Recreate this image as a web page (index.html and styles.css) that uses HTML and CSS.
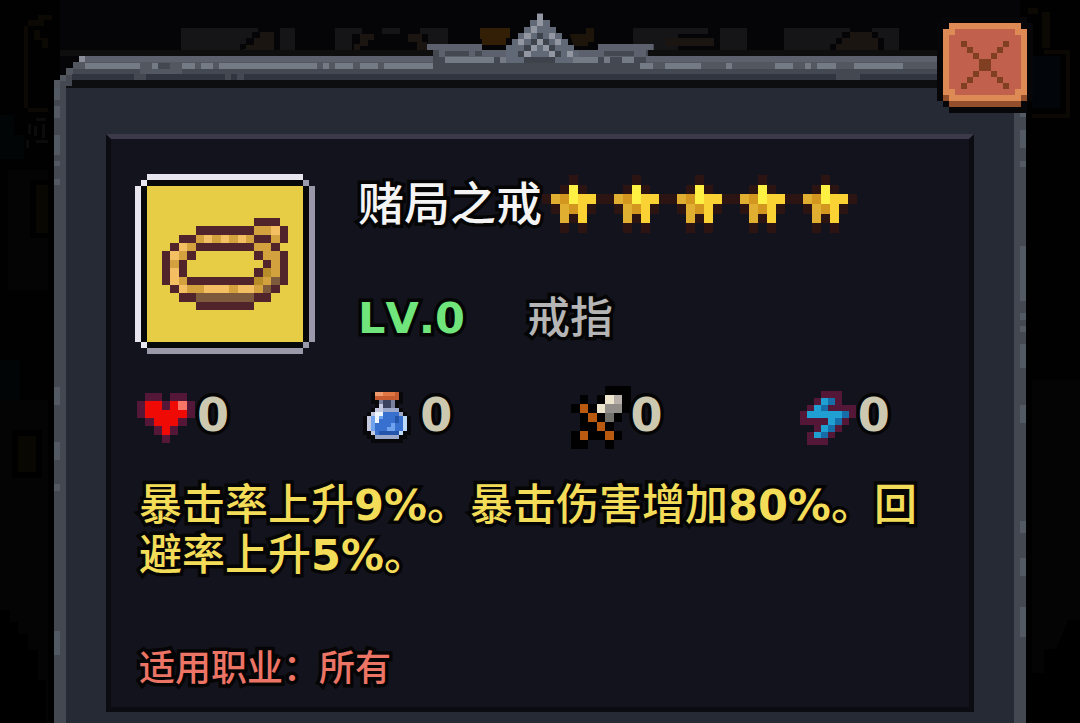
FILE: index.html
```html
<!DOCTYPE html>
<html lang="zh-CN">
<head>
<meta charset="utf-8">
<meta name="viewport" content="width=device-width, initial-scale=1">
<title>赌局之戒</title>
<link rel="stylesheet" href="styles.css">
</head>
<body>
<svg class="backdrop" viewBox="0 0 1080 723" preserveAspectRatio="none" aria-hidden="true">
  <path fill="#050507" d="M60 0H1020V90H60z"/>
  <path fill="#040404" d="M8 170H48V290H8zM0 400H48V723H0zM1032 380H1080V723H1032z"/>
  <path fill="#000" d="M0 610h10v12h8v12h10v16h10v30h8v43H0zM1068 620h12v103h-48v-50h12v-24h12z"/>
  <path fill="#020506" d="M0 115h14v20h10v24H0zM0 360h20v40H0z"/>
  <path fill="#000" d="M30 180h18v58H30zM12 430h30v48H12z"/>
  <path fill="#080701" d="M36 185h12v48H36zM18 436h18v36H18z"/>
  <path fill="#0c0803" d="M24 26h4v82h-4zM28 20h10v-5h14v5h-8v6H28zM34 30h6v8h8v10h-6v-8h-8zM28 108h20v4H28z"/>
  <path fill="#0b0b0b" d="M28 124h3v10h-3zM26 140h3v8h-3zM36 118h10v3H36zM34 126h3v10h-3zM42 124h3v14h-3zM36 140h12v3H36z"/>
  <path fill="#0c0803" d="M1028 8h10v6h-10zM1042 12h8v36h-8zM1044 50h26v68h-38v-4h34V54h-22z"/>
  <path fill="#02060a" d="M1032 56h28v52h-28z"/>
  <path fill="#0e0e0f" d="M60 50H1020V56H60z"/>
  <path fill="#151517" d="M181 28h114v22H181zM335 28h113v22H335zM633 28h114v22H633zM784 28h115v22H784z"/>
  <path fill="#050507" d="M274 28h6v22h-6zM240 50v-6h6v-6h6v-6h6v-6h22v18zM352 50V34h10v-6h20v6h18v-6h20v6h8v16zM678 34h30v-6h12v22h-42zM830 50v-6h6v-6h6v-6h8v-4h22v4h6v6h6v12z"/>
  <path fill="#1a1510" d="M246 50v-5h8v-7h6v-6h14v18zM354 44h6V34h14v6h-6v6h-8v4h-6zM408 34h14v8h5v8h-10v-8h-9zM666 38h48v8h-48zM836 50v-6h6v-6h8v-6h22v6h6v12z"/>
  <path fill="#331e06" d="M480 28h30v10h-4v7h-24v-6h-2z"/>
  <path fill="#1d1509" d="M570 34h18v12h-14zM586 28h8v14h-6v-8h-2z"/>
</svg>
<main class="dialog" aria-labelledby="item-name">
  <svg class="trim" viewBox="54 8 972 80" preserveAspectRatio="none" aria-hidden="true">
    <path fill="#444850" d="M54 88V80h6v-5h6v-6h7v-7h6v-6H433v-6h-6v-6h55v6h24v-5h6v-6h6v-6h6v-6h6v-7h7v-7h6v7h7v7h6v6h6v6h6v6h6v5h25v-6h55v6h-6v6H1026V88z"/>
    <path fill="#5c616d" d="M79 56H433v6H79zM427 44h55v6h-55zM439 50h67v7h-67zM573 50h73v7h-73zM598 44h55v6h-55zM646 56h380v6H646z"/>
    <path fill="#525760" d="M73 62H433v7H73zM646 62h380v7H646zM54 80h6v8h-6zM60 75h6v6h-6zM66 68h7v7h-7zM140 68h42v6h-42z"/>
    <path fill="#8b8e98" d="M79 56h6v6h-6z"/>
    <path fill="#444850" d="M158 63h12v6h-12zM445 51h24v5h-24zM475 51h7v5h-7zM604 51h30v5h-30z"/>
    <path fill="#757b84" d="M85 63h55v6H85zM152 63h6v6h-6zM182 63h13v6h-13zM201 63h12v6h-12zM219 63h98v6h-98zM323 63h6v6h-6zM335 63h18v6h-18zM360 63h18v6h-18zM384 63h49v6h-49zM445 57h49v6h-49zM500 57h6v6h-6zM573 57h25v6h-25zM604 57h6v6h-6zM622 57h12v6h-12zM640 63h13v6h-13zM665 63h36v6h-36zM726 63h6v6h-6zM775 63h18v6h-18zM805 63h6v6h-6zM817 63h19v6h-19zM854 63h49v6h-49z"/>
    <path fill="#31353f" d="M72 74h62v6H72zM146 74h79v6h-79zM231 74h6v6h-6zM244 74h592v6H244zM860 74h166v6H860z"/>
    <path fill="#0c0e10" d="M72 80h954v8H72zM66 86h7v2h-7z"/>
    <path fill="#626976" d="M537 14h6v6h7v7h6v6h6v6h6v6h6v6h5v6h-6v6H506V45h6v-6h6v-6h6v-6h6v-7h7z"/>
    <path fill="#9297a2" d="M537 14h6v12h-6zM531 26h6v7h-6zM524 33h7v6h-7zM518 39h6v6h-6zM549 33h6v6h-6zM555 39h6v6h-6zM537 39h6v6h-6zM531 45h6v6h-6zM543 45h6v6h-6zM524 51h7v6h-7zM549 51h6v6h-6zM567 51h6v6h-6z"/>
    <path fill="#3e424b" d="M537 33h6v6h-6zM531 39h6v6h-6zM543 39h6v6h-6zM524 45h7v6h-7zM549 45h6v6h-6zM518 51h6v6h-6zM555 51h6v6h-6zM524 57h31v6h-31z"/>
  </svg>
  <div class="body">
    <svg class="rail rail-left" viewBox="0 88 6 635" preserveAspectRatio="none" aria-hidden="true">
      <path fill="#535a64" d="M0 88h6v12H0zM0 106h6v12H0zM0 135h6v20H0zM0 161h6v5H0zM0 179h6v6H0zM0 387h6v18H0zM0 442h6v18H0zM0 484h6v7H0zM0 631h6v24H0z"/>
    </svg>
    <svg class="rail rail-right" viewBox="0 88 6 635" preserveAspectRatio="none" aria-hidden="true">
      <path fill="#535a64" d="M0 106h6v11H0zM0 130h6v18H0zM0 161h6v6H0zM0 246h6v55H0zM0 313h6v7H0zM0 326h6v6H0zM0 344h6v24H0zM0 405h6v18H0zM0 521h6v12H0zM0 558h6v18H0zM0 607h6v30H0z"/>
    </svg>
    <section class="card">
      <header class="item">
        <svg class="item-icon" viewBox="0 0 180 180" role="img" aria-label="戒指">
          <path fill="#07080a" d="M12 6h156v6h6v156h-6v6H12v-6H6V12h6z"/>
          <path fill="#e8e5ee" d="M12 0h156v6H12zM0 12h6v156H0zM6 6h6v6H6zM6 168h6v6H6z"/>
          <path fill="#9b98a9" d="M12 174h156v6H12zM174 12h6v156h-6zM168 6h6v6h-6zM168 168h6v6h-6z"/>
          <path fill="#e7cd46" d="M12 12h156v156H12z"/>
          <svg x="27" y="44" width="126" height="92" viewBox="0 0 15 11" preserveAspectRatio="none">
            <path fill="#51232b" d="M11 0h3v1h-3zM4 1h7v1H4zM14 1h1v2h-1zM2 2h2v1H2zM11 2h2v1h-2zM1 3h1v1H1zM4 3h7v1H4zM13 3h1v1h-1zM0 4h1v4H0zM3 4h1v1H3zM11 4h1v1h-1zM14 4h1v4h-1zM2 5h1v2H2zM12 5h1v1h-1zM11 6h1v1h-1zM3 7h8v1H3zM1 8h1v1H1zM13 8h1v1h-1zM2 9h2v1H2zM11 9h2v1h-2zM4 10h7v1H4z"/>
            <path fill="#d3a23f" d="M11 1h2v1h-2zM4 2h1v1H4zM6 2h1v1H6zM8 2h1v1H8zM10 2h1v1h-1zM13 2h1v1h-1zM3 3h1v1H3zM11 3h2v1h-2zM2 4h1v1H2zM12 4h2v1h-2zM1 5h1v1H1zM13 5h1v2h-1zM2 7h1v1H2zM12 7h1v1h-1zM3 8h2v1H3zM8 8h1v1H8zM11 8h1v1h-1z"/>
            <path fill="#f3bf62" d="M13 1h1v1h-1zM5 2h1v1H5zM7 2h1v1H7zM9 2h1v1H9zM2 3h1v1H2zM1 4h1v1H1zM1 6h1v2H1zM2 8h1v1H2zM5 8h3v1H5zM9 8h2v1H9z"/>
            <path fill="#b88c28" d="M12 6h1v1h-1zM11 7h1v1h-1z"/>
            <path fill="#7d5a3b" d="M13 7h1v1h-1zM12 8h1v1h-1zM4 9h7v1H4z"/>
          </svg>
        </svg>
        <div class="item-info">
          <div class="title-row">
            <h1 id="item-name" class="name">赌局之戒</h1>
            <svg class="stars" viewBox="0 0 35 6" preserveAspectRatio="none" role="img" aria-label="五星">
              <defs>
                <g id="star">
                  <path fill="#2b1411" d="M3 0h1v1H3zM2 1h1v1H2zM4 1h1v1H4zM0 2h1v1H0zM6 2h1v1H6zM1 3h1v1H1zM5 3h1v1H5zM3 4h1v1H3zM2 5h1v1H2zM4 5h1v1H4z"/>
                  <path fill="#e0ae30" d="M1 2h1v1H1zM2 3h1v2H2z"/>
                  <path fill="#d3961f" d="M2 2h1v1H2zM3 3h1v1H3z"/>
                  <path fill="#fff144" d="M3 1h1v2H3z"/>
                  <path fill="#fbd233" d="M4 2h2v1H4zM4 3h1v2H4z"/>
                </g>
              </defs>
              <use href="#star"/><use href="#star" x="7"/><use href="#star" x="14"/><use href="#star" x="21"/><use href="#star" x="28"/>
            </svg>
          </div>
          <div class="level-row">
            <span class="level">LV.0</span>
            <span class="kind">戒指</span>
          </div>
        </div>
      </header>
      <ul class="stats">
        <li class="stat">
          <svg class="heart" viewBox="0 0 7 6" preserveAspectRatio="none" role="img" aria-label="生命">
            <path fill="#541738" d="M1 0h2v1H1zM4 0h2v1H4zM0 1h1v2H0zM3 1h1v1H3zM6 1h1v2H6zM1 3h1v1H1zM5 3h1v1H5zM2 4h1v1H2zM4 4h1v1H4zM3 5h1v1H3z"/>
            <path fill="#f00a05" d="M1 1h2v1h1V1h2v2H5v1H4v1H3V4H2V3H1z"/>
            <path fill="#fb7566" d="M5 1h1v1H5z"/>
          </svg>
          <span class="value">0</span>
        </li>
        <li class="stat stat-potion">
          <svg class="potion" viewBox="0 0 12 13" preserveAspectRatio="none" role="img" aria-label="魔法">
            <path fill="#08080b" d="M2 0h8v3h-1v1h1v1h1v1h1v5h-1v1h-1v1H2v-1H1v-1H0V6h1V5h1V4h1V3H2z"/>
            <path fill="#c75c31" d="M3 0h6v2H3z"/><path fill="#ee9a6d" d="M3 0h2v1H3z"/><path fill="#e17743" d="M5 0h3v1H5z"/>
            <path fill="#3b4260" d="M5 2h2v2H5z"/><path fill="#79809d" d="M4 2h1v1H4zM7 2h1v2H7z"/>
            <path fill="#c4c9df" d="M4 3h1v1H4zM3 4h2v1H3zM2 5h1v1H2zM1 6h1v4H1zM2 10h1v1H2z"/>
            <path fill="#9da9ca" d="M5 4h4v1H5zM9 5h1v1H9zM3 11h6v1H3z"/>
            <path fill="#bcd9f5" d="M10 6h1v4h-1zM9 10h1v1H9z"/>
            <path fill="#3770ce" d="M3 5h6v1h1v4H9v1H3v-1H2V6h1z"/>
            <path fill="#6fa3ed" d="M2 6h3v1H4v1H3v2H2zM7 8h1v1H7zM6 9h2v1H6z"/>
            <path fill="#edf5ff" d="M3 5h2v1H4v2H3z"/>
            <path fill="#2455aa" d="M8 6h1v2H8zM4 10h5v1H4z"/>
          </svg>
          <span class="value">0</span>
        </li>
        <li class="stat stat-sword">
          <svg class="sword" viewBox="0 0 7 7" preserveAspectRatio="none" role="img" aria-label="攻击">
            <path fill="#010101" d="M4 0h3v3H6V1H4zM1 1h1v1H1zM3 1h1v1H3zM0 2h1v1H0zM2 2h1v1H2zM1 3h1v1H1zM3 3h1v1H3zM5 3h1v1H5zM1 4h2v1H1zM4 4h1v1H4zM0 5h1v1h1v1H0zM2 5h2v1H2zM5 5h1v1H5zM4 6h1v1H4z"/>
            <path fill="#b95a10" d="M1 2h1v1H1zM2 3h1v1H2zM3 4h1v1H3zM4 5h1v1H4zM1 5h1v1H1z"/>
            <path fill="#eee5cf" d="M4 1h1v1H4zM3 2h1v1H3z"/><path fill="#b7b0aa" d="M5 1h1v1H5z"/>
            <path fill="#918e89" d="M4 2h2v1H4z"/><path fill="#73716c" d="M4 3h1v1H4z"/>
          </svg>
          <span class="value">0</span>
        </li>
        <li class="stat">
          <svg class="bolt" viewBox="0 0 8 8" preserveAspectRatio="none" role="img" aria-label="速度">
            <path fill="#541738" d="M3 0h3v2h2v2H7v1H6v1H5v1H4v1H1V6h1V5H0V3h1V2h1V1h1z"/>
            <path fill="#209fd3" d="M3 1h1v1H3zM2 2h1v1H2zM1 3h5v1H1zM4 4h1v1H4zM3 5h1v1H3zM2 6h1v1H2z"/>
            <path fill="#176da8" d="M4 1h1v1H4zM3 2h1v1H3zM6 3h1v1H6zM5 4h1v1H5zM4 5h1v1H4zM3 6h1v1H3z"/>
          </svg>
          <span class="value">0</span>
        </li>
      </ul>
      <p class="effect">暴击率上升<b>9%</b>。暴击伤害增加<b>80%</b>。回避率上升<b>5%</b>。</p>
      <p class="classes">适用职业：所有</p>
    </section>
  </div>
  <button class="close" type="button" aria-label="关闭">
    <svg viewBox="-1 -1 16 16" aria-hidden="true">
      <path fill="#07070a" d="M0-1h14v1h1v13h-1v2H1v-1H0v-1h-1V0h1z"/>
      <path fill="#de8a55" d="M1 0h12v1h1v11h-1v1H1v-1H0V1h1z"/>
      <path fill="#934f2b" d="M0 12h1v1h12v-1h1v1h-1v1H1v-1H0z"/>
      <path fill="#c1604c" d="M2 1h10v1h1v9h-1v1H2v-1H1V2h1z"/>
      <path fill="#803f22" d="M3 3h1v1H3zM4 4h1v1H4zM5 5h1v1H5zM6 6h2v2H6zM8 8h1v1H8zM9 9h1v1H9zM10 10h1v1h-1zM10 3h1v1h-1zM9 4h1v1H9zM8 5h1v1H8zM5 8h1v1H5zM4 9h1v1H4zM3 10h1v1H3z"/>
    </svg>
  </button>
</main>
</body>
</html>
```
FILE: styles.css
```css
* {
  box-sizing: border-box;
}

body {
  margin: 0;
  min-height: 100vh;
  padding: 8px 54px 0;
  display: flex;
  flex-direction: column;
  position: relative;
  background: #010101;
  font-family: "DejaVu Sans", "Noto Sans CJK SC", sans-serif;
  font-kerning: none;
}

svg {
  display: block;
  flex: none;
  shape-rendering: crispEdges;
}

.backdrop {
  position: absolute;
  inset: 0;
  width: 100%;
  height: 100%;
}

.dialog {
  position: relative;
  flex: 1;
  display: flex;
  flex-direction: column;
}

.trim {
  width: 100%;
  height: 80px;
}

.body {
  position: relative;
  flex: 1;
  padding: 46px 40px 11px;
  border: solid #444850;
  border-width: 0 12px;
  background: #262a34;
}

.rail {
  position: absolute;
  top: 0;
  width: 6px;
  height: 100%;
}

.rail-left {
  left: -12px;
}

.rail-right {
  right: -12px;
}

.card {
  padding: 35px 24px 13px;
  border: 5px solid #0b0c11;
  border-top-color: #3b394a;
  background: #12131c;
}

.item {
  display: flex;
  gap: 43px;
}

.item-icon {
  width: 180px;
  height: 180px;
}

.item-info {
  display: flex;
  flex-direction: column;
  gap: 54px;
}

.title-row {
  display: flex;
  align-items: center;
}

.name,
.level,
.kind,
.value,
.effect,
.classes {
  margin: 0;
  -webkit-text-stroke: 7px #050506;
  paint-order: stroke fill;
}

.name {
  font-size: 46px;
  font-weight: 500;
  line-height: 60px;
  color: #f4f4f4;
}

.stars {
  width: 315px;
  height: 58px;
}

.level-row {
  display: flex;
  gap: 62px;
  font-size: 43px;
  line-height: 60px;
}

.level {
  font-weight: 700;
  color: #70e57b;
}

.kind {
  font-weight: 500;
  color: #b5b5b5;
}

.stats {
  display: grid;
  grid-template-columns: 226fr 207fr 229fr 145fr;
  margin: 32px 0 0;
  padding: 0 0 0 2px;
  list-style: none;
}

.stat {
  display: flex;
  align-items: center;
  gap: 2px;
  height: 63px;
}

.stat-potion {
  gap: 9px;
}

.stat-sword {
  gap: 0;
}

.heart {
  width: 58px;
  height: 50px;
}

.potion {
  width: 48px;
  height: 51px;
}

.sword {
  width: 60px;
  height: 63px;
}

.bolt {
  width: 56px;
  height: 54px;
}

.value {
  padding-bottom: 6px;
  font-size: 46px;
  font-weight: 700;
  line-height: 50px;
  color: #cdc9b1;
}

.effect {
  margin-top: 31px;
  padding-left: 4px;
  font-size: 43px;
  font-weight: 500;
  line-height: 50px;
  color: #f3dc58;
}

.effect b {
  font-weight: 700;
}

.classes {
  margin-top: 64px;
  padding-left: 4px;
  font-size: 36px;
  font-weight: 500;
  line-height: 50px;
  color: #ec7465;
}

.close {
  position: absolute;
  top: 9px;
  right: -7px;
  width: 96px;
  height: 96px;
  padding: 0;
  border: 0;
  background: none;
  cursor: pointer;
}

.close svg {
  width: 100%;
  height: 100%;
}
```
